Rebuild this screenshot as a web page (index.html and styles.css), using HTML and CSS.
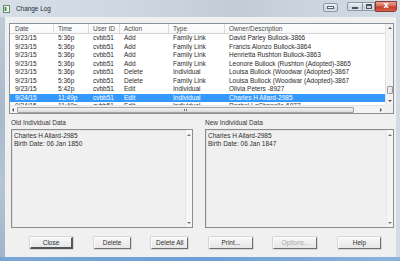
FILE: index.html
```html
<!DOCTYPE html>
<html>
<head>
<meta charset="utf-8">
<link rel="stylesheet" href="styles.css">
</head>
<body>
<div class="window">
  <div class="titlebar">
    <svg class="appicon" width="7" height="8" viewBox="0 0 7 8">
      <rect x="0.5" y="0.5" width="6" height="7" fill="#f4f7f2" stroke="#6b8a6e" stroke-width="1"/>
      <rect x="1.5" y="2" width="2" height="4" fill="#3f9a4a"/>
    </svg>
    <span class="title">Change Log</span>
    <div class="tb-btns">
      <div class="tb-btn tb-extra"><span class="ext-icon"></span></div>
      <div class="tb-group">
        <div class="tb-btn tb-min"><span class="min-icon"></span></div>
        <div class="tb-btn tb-max"><span class="max-icon"></span></div>
      </div>
      <div class="tb-close">x</div>
    </div>
  </div>
  <div class="middle">
    <div class="frame-left"></div>
    <div class="client">
      <div class="list">
        <div class="list-main">
          <div class="lrow head">
            <span>Date</span><span>Time</span><span>User ID</span><span>Action</span><span>Type</span><span>Owner/Description</span>
          </div>
          <div class="lrow"><span>9/23/15</span><span>5:36p</span><span>cvbb51</span><span>Add</span><span>Family Link</span><span>David Parley Bullock-3866</span></div>
          <div class="lrow"><span>9/23/15</span><span>5:36p</span><span>cvbb51</span><span>Add</span><span>Family Link</span><span>Francis Alonzo Bullock-3864</span></div>
          <div class="lrow"><span>9/23/15</span><span>5:36p</span><span>cvbb51</span><span>Add</span><span>Family Link</span><span>Henrietta Rushton Bullock-3863</span></div>
          <div class="lrow"><span>9/23/15</span><span>5:36p</span><span>cvbb51</span><span>Add</span><span>Family Link</span><span>Leonore Bullock (Rushton (Adopted)-3865</span></div>
          <div class="lrow"><span>9/23/15</span><span>5:36p</span><span>cvbb51</span><span>Delete</span><span>Individual</span><span>Louisa Bullock (Woodwar (Adopted)-3867</span></div>
          <div class="lrow"><span>9/23/15</span><span>5:36p</span><span>cvbb51</span><span>Delete</span><span>Family Link</span><span>Louisa Bullock (Woodwar (Adopted)-3867</span></div>
          <div class="lrow"><span>9/23/15</span><span>5:42p</span><span>cvbb51</span><span>Edit</span><span>Individual</span><span>Olivia Peters -8927</span></div>
          <div class="lrow sel"><span>9/24/15</span><span>11:49p</span><span>cvbb51</span><span>Edit</span><span>Individual</span><span>Charles H Allard-2985</span></div>
          <div class="lrow"><span>9/24/15</span><span>11:49p</span><span>cvbb51</span><span>Edit</span><span>Individual</span><span>Rachel LaChapelle-6977</span></div>
        </div>
        <div class="vscroll">
          <span class="arr up"></span>
          <div class="vtrack"><div class="vthumb"></div></div>
          <span class="arr down"></span>
        </div>
        <div class="hscroll">
          <span class="arr left"></span>
          <div class="htrack"><div class="hthumb"><span class="grip"></span></div></div>
          <span class="arr right"></span>
        </div>
        <div class="corner"></div>
      </div>

      <div class="details">
        <div class="detail old">
          <div class="dlabel">Old Individual Data</div>
          <div class="dbox">
            <div class="dtext">Charles H Allard-2985<br>Birth Date: 06 Jan 1850</div>
            <div class="dscroll"><span class="arr up"></span><span class="arr down"></span></div>
          </div>
        </div>
        <div class="detail new">
          <div class="dlabel">New Individual Data</div>
          <div class="dbox">
            <div class="dtext">Charles H Allard-2985<br>Birth Date: 06 Jan 1847</div>
            <div class="dscroll"><span class="arr up"></span><span class="arr down"></span></div>
          </div>
        </div>
      </div>

      <div class="buttons">
        <div class="btn w43 default">Close</div>
        <div class="btn w37">Delete</div>
        <div class="btn w37">Delete All</div>
        <div class="btn w44">Print...</div>
        <div class="btn w44 disabled">Options...</div>
        <div class="btn w43">Help</div>
      </div>
    </div>
    <div class="frame-right"></div>
  </div>
  <div class="frame-bottom"></div>
</div>
</body>
</html>
```
FILE: styles.css
```css
* { box-sizing: border-box; }
html, body { margin: 0; padding: 0; }
body {
  width: 400px;
  height: 261px;
  overflow: hidden;
  font-family: "Liberation Sans", Arial, sans-serif;
  font-size: 6.5px;
  color: #2b2b2b;
}
.window {
  width: 400px;
  height: 261px;
  display: flex;
  flex-direction: column;
  background: #c9d4df;
}
.titlebar {
  height: 17px;
  display: flex;
  align-items: center;
  padding-left: 3px;
  background: linear-gradient(90deg, #d6dfe8 0%, #cfd8e2 30%, #c2ccd7 60%, #cdd6e0 80%, #d3dbe4 100%);
}
.appicon { display: block; margin-right: 6px; }
.title { font-size: 6.4px; color: #1f2a36; }
.tb-btns {
  margin-left: auto;
  display: flex;
  align-items: flex-start;
  align-self: flex-start;
  padding-top: 1px;
  padding-right: 3px;
}
.tb-btn {
  height: 9px;
  display: flex;
  align-items: center;
  justify-content: center;
  background: linear-gradient(#eef2f6, #d3dbe3 50%, #c3ccd6 51%, #dbe2e9);
  border: 1px solid #8a98a8;
}
.tb-extra { width: 15px; border-radius: 2px; margin-right: 9px; margin-top: 2px; }
.ext-icon { width: 7px; height: 3px; border: 1px solid #5a6673; background: #f4f6f8; }
.tb-group { display: flex; margin-top: 1px; }
.tb-min { width: 15px; border-radius: 2px 0 0 2px; border-right: none; }
.tb-max { width: 13px; }
.min-icon { width: 6px; height: 2px; background: #4a5560; margin-top: 3px; }
.max-icon { width: 6px; height: 5px; border: 1px solid #4a5560; border-top-width: 2px; }
.tb-close {
  width: 22px;
  height: 11px;
  display: flex;
  align-items: center;
  justify-content: center;
  font-family: "DejaVu Sans", sans-serif;
  font-weight: bold;
  font-size: 8px;
  line-height: 1;
  color: #fff;
  background: linear-gradient(#e9a595, #d26a57 45%, #c43e2a 55%, #d7604a);
  border: 1px solid #8a3a30;
  border-radius: 0 0 3px 0;
  padding-bottom: 1px;
}

.middle { flex: 1; display: flex; }
.frame-left { width: 5px; background: linear-gradient(#c0ccd8, #a9b9cb 40%, #b6c4d3 70%, #9fb4ca); }
.frame-right { width: 4px; background: #d2dae3; }
.frame-bottom { height: 4px; background: linear-gradient(90deg, #7aa6d6, #6d9fd6 50%, #8db3dc); }

.client {
  flex: 1;
  background: #f0f0f0;
  padding: 6px 2px 8px 4px;
  display: flex;
  flex-direction: column;
}

/* list view */
.list {
  height: 91px;
  border: 1px solid #8a9099;
  background: #fff;
  display: grid;
  grid-template-columns: 1fr 8px;
  grid-template-rows: 1fr 8px;
}
.list-main { overflow: hidden; }
.lrow {
  display: grid;
  grid-template-columns: 44px 35px 31px 49px 56px 1fr;
  height: 8.5px;
  line-height: 8.5px;
  white-space: nowrap;
}
.lrow span { padding-left: 4px; overflow: hidden; }
.lrow span:first-child { padding-left: 5px; }
.lrow.head {
  height: 10px;
  line-height: 9px;
  color: #4a4a4a;
  border-bottom: 1px solid #d5d5d5;
  background: linear-gradient(#fff, #f7f8fa);
}
.lrow.head span { border-right: 1px solid #dcdcdc; }
.lrow.head span:last-child { border-right: none; }
.lrow.sel { background: #3399ff; color: #fff; }

.arr { display: block; width: 0; height: 0; border: 2px solid transparent; }
.arr.up { border-bottom: 2px solid #555; border-top: none; }
.arr.down { border-top: 2px solid #555; border-bottom: none; }
.arr.left { border-right: 2px solid #555; border-left: none; }
.arr.right { border-left: 2px solid #555; border-right: none; }

.vscroll {
  grid-row: 1;
  grid-column: 2;
  background: #f3f3f3;
  border-left: 1px solid #e4e4e4;
  display: flex;
  flex-direction: column;
  align-items: center;
  padding: 3px 0 3px;
}
.vtrack { flex: 1; width: 100%; display: flex; flex-direction: column; justify-content: flex-end; padding-bottom: 6px; }
.vthumb {
  height: 8px;
  margin: 0 0.5px;
  border: 1px solid #9a9a9a;
  border-radius: 1px;
  background: linear-gradient(90deg, #f5f5f5, #dedede);
}
.vscroll .arr.down { margin-top: 0; }

.hscroll {
  grid-row: 2;
  grid-column: 1;
  background: #f3f3f3;
  border-top: 1px solid #e4e4e4;
  display: flex;
  align-items: center;
  padding: 0 3px 0 2px;
}
.htrack { flex: 1; height: 100%; padding: 0 26px 0 3px; display: flex; align-items: center; }
.hthumb {
  flex: 1;
  height: 6px;
  border: 1px solid #a2a2a2;
  border-radius: 1px;
  background: linear-gradient(#f4f4f4, #dadada);
  display: flex;
  justify-content: center;
  align-items: center;
}
.grip { width: 3px; height: 2px; border-left: 1px solid #777; border-right: 1px solid #777; }
.corner { grid-row: 2; grid-column: 2; background: #f0f0f0; }

/* detail panels */
.details {
  display: flex;
  margin-top: 5px;
  padding-left: 2px;
  gap: 12px;
}
.detail { display: flex; flex-direction: column; }
.detail.old { width: 182px; }
.detail.new { width: 189px; }
.dlabel { height: 8px; line-height: 8px; color: #333; margin-bottom: 2px; }
.dbox {
  height: 99px;
  border: 1px solid #8c8c8c;
  box-shadow: inset 1px 1px 0 #e2e2e2;
  background: #f0f0f0;
  display: flex;
}
.dtext { flex: 1; padding: 2px 0 0 2px; line-height: 7.5px; color: #2e2e2e; }
.dscroll {
  width: 7px;
  background: #f6f6f6;
  border-left: 1px solid #e6e6e6;
  display: flex;
  flex-direction: column;
  justify-content: space-between;
  align-items: center;
  padding: 4px 0 3px;
}
.dscroll .arr.up { border-bottom-color: #777; }
.dscroll .arr.down { border-top-color: #777; }

/* buttons */
.buttons {
  margin-top: 9px;
  height: 12px;
  display: flex;
  justify-content: space-between;
  padding: 0 13px 0 21px;
}
.btn {
  height: 12px;
  line-height: 10px;
  text-align: center;
  color: #2f2f2f;
  background: linear-gradient(#f7f7f7, #e6e6e6);
  border-top: 1px solid #fcfcfc;
  border-left: 1px solid #fcfcfc;
  border-right: 1px solid #6d6d6d;
  border-bottom: 1px solid #6d6d6d;
  box-shadow: 0 0 0 0.5px #bdbdbd;
}
.btn.default { border-right: 2px solid #555; border-bottom: 2px solid #555; }
.btn.disabled { color: #a8a8a8; }
.w43 { width: 43px; }
.w37 { width: 37px; }
.w44 { width: 44px; }
```
